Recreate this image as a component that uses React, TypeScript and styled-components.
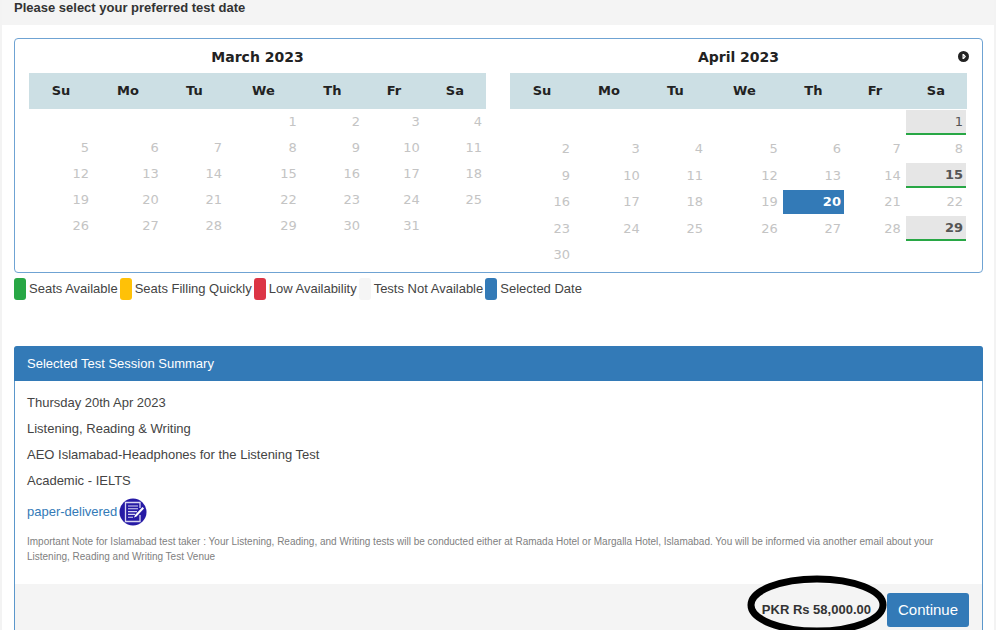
import React from "react";
import styled, { createGlobalStyle } from "styled-components";

const GlobalStyle = createGlobalStyle`
  * { box-sizing: border-box; }
  body {
    margin: 0;
    background: #fff;
    color: #444;
    font: 13px/18px "Liberation Sans", Arial, sans-serif;
  }
`;

const Shell = styled.main`
  height: 100vh;
  overflow: hidden;
  margin-right: 10px;
  border: solid #f3f3f3;
  border-width: 0 2px;
`;

const StepTitle = styled.h1`
  margin: 0;
  padding: 0 12px 9px;
  background: #f4f4f4;
  font-size: 13px;
  line-height: 16px;
  font-weight: bold;
  color: #333;
`;

const Content = styled.div`
  padding: 13px 11px 0 12px;
`;

const Calendar = styled.section`
  display: flex;
  gap: 24px;
  padding: 5px 15px 4px 14px;
  border: 1px solid #6fa3d3;
  border-radius: 4px;
  font-family: "DejaVu Sans", Verdana, sans-serif;
`;

const Month = styled.div`
  flex: 1 1 0;
`;

const MonthHeader = styled.header`
  display: grid;
  grid-template-columns: 12px 1fr 12px;
  align-items: center;
  height: 29px;
  margin: 0 -3px;
  padding-bottom: 3px;
`;

const MonthName = styled.h2`
  grid-column: 2;
  margin: 0;
  font-size: 14px;
  line-height: 18px;
  text-align: center;
  color: #222;
`;

const NextButton = styled.button`
  display: flex;
  width: 12px;
  height: 12px;
  padding: 0;
  border: 0;
  background: none;
`;

const Days = styled.table`
  width: 100%;
  table-layout: fixed;
  border-collapse: collapse;
  font-size: 13px;
`;

const DayColumn = styled.col<{ $share: number }>`
  width: ${(p) => p.$share}%;
`;

const Weekday = styled.th`
  height: 36px;
  padding: 0;
  background: #ccdfe4;
  color: #222;
  text-align: center;
`;

const DayCell = styled.td`
  height: 26px;
  padding: 1px;
  text-align: right;
`;

type DayState = "off" | "open" | "openBold" | "selected";

const Day = styled.button<{ $state: DayState }>`
  display: block;
  width: 100%;
  height: ${(p) => (p.$state.startsWith("open") ? 25 : 24)}px;
  padding: 0 3px;
  border: 0;
  border-bottom: ${(p) => (p.$state.startsWith("open") ? "2px solid #28a745" : "0")};
  background: ${(p) =>
    p.$state === "selected" ? "#337ab7" : p.$state === "off" ? "transparent" : "#e6e6e6"};
  color: ${(p) => (p.$state === "selected" ? "#fff" : p.$state === "off" ? "#c4c4c4" : "#555")};
  font: inherit;
  font-weight: ${(p) => (p.$state === "selected" || p.$state === "openBold" ? "bold" : "normal")};
  line-height: 22px;
  text-align: right;
`;

const Legend = styled.ul`
  display: flex;
  gap: 2px;
  height: 24px;
  margin: 4px 0 0;
  padding: 0;
  list-style: none;
`;

const LegendItem = styled.li`
  display: flex;
  align-items: center;
  gap: 3px;
`;

const Swatch = styled.span<{ $color: string }>`
  width: 12px;
  height: 22px;
  border-radius: 3px;
  background: ${(p) => p.$color};
`;

const Summary = styled.section`
  margin-top: 45px;
  border: 1px solid #5b97cb;
  border-radius: 4px;
`;

const SummaryTitle = styled.h2`
  margin: -1px -1px 0;
  padding: 9px 13px 8px;
  border-radius: 3px 3px 0 0;
  background: #337ab7;
  color: #fff;
  font-size: 13px;
  font-weight: normal;
`;

const SummaryBody = styled.div`
  display: flex;
  flex-direction: column;
  gap: 8px;
  padding: 13px 12px 20px;
`;

const Line = styled.p`
  margin: 0;
`;

const Delivery = styled.a`
  display: flex;
  align-items: center;
  gap: 2px;
  height: 28px;
  color: #337ab7;
  text-decoration: none;
`;

const Note = styled.p`
  margin: 0;
  font-size: 10px;
  line-height: 15px;
  color: #808080;
`;

const SummaryFooter = styled.footer`
  display: flex;
  justify-content: flex-end;
  align-items: center;
  gap: 16px;
  padding: 9px 13px;
  background: #f4f4f4;
`;

const Price = styled.strong`
  position: relative;
  font-size: 13px;
  color: #333;
`;

const PriceRing = styled.svg`
  position: absolute;
  left: 50%;
  top: 50%;
  width: 140px;
  height: 60px;
  margin: -35px 0 0 -69px;
`;

const Continue = styled.button`
  height: 34px;
  padding: 0 11px;
  border: 0;
  border-radius: 3px;
  background: #337ab7;
  color: #fff;
  font: 15px/20px "Liberation Sans", Arial, sans-serif;
`;

const WEEKDAYS = [
  { name: "Su", share: 14 },
  { name: "Mo", share: 15.3 },
  { name: "Tu", share: 13.8 },
  { name: "We", share: 16.4 },
  { name: "Th", share: 13.8 },
  { name: "Fr", share: 13.1 },
  { name: "Sa", share: 13.6 },
];

const LEGEND = [
  { label: "Seats Available", color: "#28a745" },
  { label: "Seats Filling Quickly", color: "#ffc107" },
  { label: "Low Availability", color: "#dc3545" },
  { label: "Tests Not Available", color: "#f5f5f5" },
  { label: "Selected Date", color: "#337ab7" },
];

function weeksOf(firstWeekday: number, length: number) {
  const weeks: (number | null)[][] = [];
  for (let start = 1 - firstWeekday; start <= length; start += 7) {
    weeks.push(
      WEEKDAYS.map((_, i) => (start + i >= 1 && start + i <= length ? start + i : null))
    );
  }
  return weeks;
}

interface MonthViewProps {
  name: string;
  first: number;
  length: number;
  states?: Record<number, DayState>;
  next?: boolean;
}

function MonthView({ name, first, length, states = {}, next }: MonthViewProps) {
  return (
    <Month>
      <MonthHeader>
        <MonthName>{name}</MonthName>
        {next && (
          <NextButton type="button" aria-label="Next month">
            <svg width="12" height="12" viewBox="0 0 12 12">
              <circle cx="5.500" cy="5.500" r="5.500" fill="#222" />
              <path d="M4.500 3 H5.800 L8 5.500 L5.800 8 H4.500 Z" fill="#fff" />
              <path d="M5.500 4.600 L6.600 5.500 L5.500 6.400 Z" fill="#777" />
            </svg>
          </NextButton>
        )}
      </MonthHeader>
      <Days aria-label={name}>
        <colgroup>
          {WEEKDAYS.map((d) => (
            <DayColumn key={d.name} $share={d.share} />
          ))}
        </colgroup>
        <thead>
          <tr>
            {WEEKDAYS.map((d) => (
              <Weekday key={d.name} scope="col">
                {d.name}
              </Weekday>
            ))}
          </tr>
        </thead>
        <tbody>
          {weeksOf(first, length).map((week, w) => (
            <tr key={w}>
              {week.map((day, i) => (
                <DayCell key={i}>
                  {day && (
                    <Day type="button" $state={states[day] ?? "off"} disabled={!states[day]}>
                      {day}
                    </Day>
                  )}
                </DayCell>
              ))}
            </tr>
          ))}
        </tbody>
      </Days>
    </Month>
  );
}

function PaperIcon() {
  return (
    <svg width="28" height="28" viewBox="0 0 28 28" aria-hidden="true">
      <circle cx="14" cy="14" r="13.5" fill="#261aa5" />
      <path
        d="M21 10 V4.500 H6.500 V23.500 H21 V17"
        fill="none"
        stroke="#d9d6f2"
        strokeWidth="1.300"
      />
      <path
        d="M9 8 H19 M9 10.800 H19 M9 13.600 H18 M9 16.400 H16 M9 19.200 H14"
        stroke="#d9d6f2"
        strokeWidth="1.100"
      />
      <path d="M23.500 9 L25 10.500 L17.500 18.500 L15 19.500 L16 17 Z" fill="#fff" />
    </svg>
  );
}

export default function App() {
  return (
    <>
      <GlobalStyle />
      <Shell>
        <StepTitle>Please select your preferred test date</StepTitle>
        <Content>
          <Calendar>
            <MonthView name="March 2023" first={3} length={31} />
            <MonthView
              name="April 2023"
              first={6}
              length={30}
              states={{ 1: "open", 15: "openBold", 20: "selected", 29: "openBold" }}
              next
            />
          </Calendar>
          <Legend>
            {LEGEND.map((item) => (
              <LegendItem key={item.label}>
                <Swatch $color={item.color} />
                {item.label}
              </LegendItem>
            ))}
          </Legend>
          <Summary>
            <SummaryTitle>Selected Test Session Summary</SummaryTitle>
            <SummaryBody>
              <Line>Thursday 20th Apr 2023</Line>
              <Line>Listening, Reading &amp; Writing</Line>
              <Line>AEO Islamabad-Headphones for the Listening Test</Line>
              <Line>Academic - IELTS</Line>
              <Delivery href="#paper">
                paper-delivered
                <PaperIcon />
              </Delivery>
              <Note>
                Important Note for Islamabad test taker : Your Listening, Reading, and Writing tests
                will be conducted either at Ramada Hotel or Margalla Hotel, Islamabad. You will be
                informed via another email about your Listening, Reading and Writing Test Venue
              </Note>
            </SummaryBody>
            <SummaryFooter>
              <Price>
                PKR Rs 58,000.00
                <PriceRing viewBox="0 0 140 60" aria-hidden="true">
                  <ellipse
                    cx="70"
                    cy="30"
                    rx="66"
                    ry="26"
                    fill="none"
                    stroke="#000"
                    strokeWidth="7"
                  />
                </PriceRing>
              </Price>
              <Continue type="button">Continue</Continue>
            </SummaryFooter>
          </Summary>
        </Content>
      </Shell>
    </>
  );
}
